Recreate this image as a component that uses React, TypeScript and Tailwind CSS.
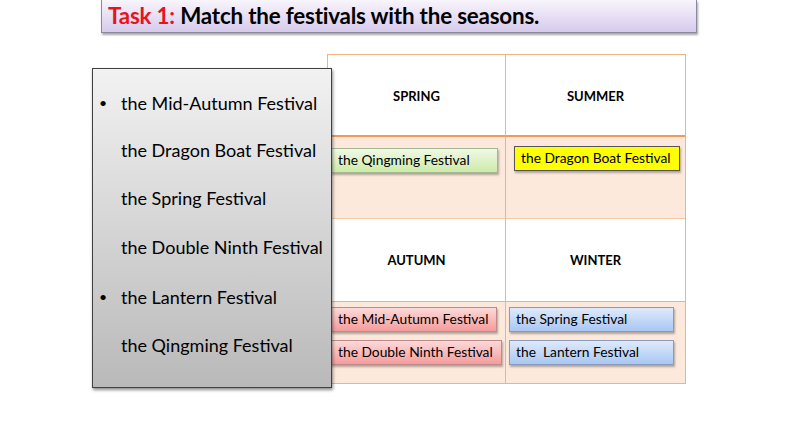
import React from "react";

const font = { fontFamily: "Lato, 'Open Sans', sans-serif" };

function Box({ text, cls }: { text: string; cls: string }) {
  return (
    <div
      className={`h-[25px] flex items-center pl-[6px] text-[13.8px] text-black whitespace-pre border shadow-[1px_2px_2px_rgba(0,0,0,0.3)] ${cls}`}
    >
      {text}
    </div>
  );
}

export default function App() {
  const items: [string, boolean, string][] = [
    ["the Mid-Autumn Festival", true, "h-[47px]"],
    ["the Dragon Boat Festival", false, "h-[48px]"],
    ["the Spring Festival", false, "h-[47px]"],
    ["the Double Ninth Festival", false, "h-[52px]"],
    ["the Lantern Festival", true, "h-[48px]"],
    ["the Qingming Festival", false, "h-[48px]"],
  ];
  return (
    <div className="w-[794px] h-[447px] bg-white relative overflow-hidden" style={font}>
      <div className="ml-[101px] w-[596px] h-[33px] border border-[#8a8a9a] border-t-0 bg-gradient-to-b from-[#f8f5fc] to-[#d7caec] shadow-[1px_2px_2px_rgba(0,0,0,0.35)] flex items-center pl-[6px]">
        <span className="text-[22.4px] font-bold leading-none tracking-[-0.2px]">
          <span className="text-[#e8141b]">Task 1: </span>
          <span className="text-black">Match the festivals with the seasons.</span>
        </span>
      </div>
      <div className="flex items-start">
        <div className="relative z-10 ml-[92px] mt-[35px] w-[240px] h-[320px] border border-[#404040] bg-gradient-to-b from-[#f2f2f2] to-[#b9b9b9] shadow-[1px_2px_3px_rgba(0,0,0,0.45)] pt-[10px]">
          {items.map(([t, b, h]) => (
            <div key={t} className={`flex items-center ${h} text-[18px] text-black leading-none`}>
              <span className="w-[28px] pl-[6px] text-[14px]">{b ? "•" : ""}</span>
              <span className="whitespace-nowrap">{t}</span>
            </div>
          ))}
        </div>
        <div className="ml-[-5px] mt-[21px] w-[359px] h-[330px] border border-[#f3b27e] grid grid-cols-[178px_179px] grid-rows-[82px_82px_83px_81px]">
          <div className="bg-white border-r border-[#f3b27e] border-b-2 border-b-[#ef9a5c] flex items-center justify-center pt-[3px] text-[13px] font-bold">SPRING</div>
          <div className="bg-white border-b-2 border-b-[#ef9a5c] flex items-center justify-center pt-[3px] text-[13px] font-bold">SUMMER</div>
          <div className="bg-[#fce9dc] border-r border-[#f3b27e] border-b border-b-[#f7c9a3] pt-[11px] pl-[3px]">
            <div className="w-[167px]">
              <Box text="the Qingming Festival" cls="border-[#a6b891] bg-gradient-to-b from-[#f0f9e6] to-[#cdeaa8]" />
            </div>
          </div>
          <div className="bg-[#fce9dc] border-b border-b-[#f7c9a3] pt-[9px] pl-[8px]">
            <div className="w-[166px]">
              <Box text="the Dragon Boat Festival" cls="border-[#555555] bg-[#ffff00]" />
            </div>
          </div>
          <div className="bg-white border-r border-[#f3b27e] border-b border-b-[#f3b27e] flex items-center justify-center pt-[2px] text-[13px] font-bold">AUTUMN</div>
          <div className="bg-white border-b border-b-[#f3b27e] flex items-center justify-center pt-[2px] text-[13px] font-bold">WINTER</div>
          <div className="bg-[#fce9dc] border-r border-[#f3b27e] pt-[5px] pl-[3px] flex flex-col gap-[8px]">
            <div className="w-[166px]">
              <Box text="the Mid-Autumn Festival" cls="border-[#c08a8a] bg-gradient-to-b from-[#fcd9d9] to-[#f39c9c]" />
            </div>
            <div className="w-[171px]">
              <Box text="the Double Ninth Festival" cls="border-[#c08a8a] bg-gradient-to-b from-[#fcd9d9] to-[#f39c9c]" />
            </div>
          </div>
          <div className="bg-[#fce9dc] pt-[5px] pl-[3px] flex flex-col gap-[8px]">
            <div className="w-[165px]">
              <Box text="the Spring Festival" cls="border-[#8a9ab8] bg-gradient-to-b from-[#dfeafb] to-[#a9c7f3]" />
            </div>
            <div className="w-[165px]">
              <Box text="the  Lantern Festival" cls="border-[#8a9ab8] bg-gradient-to-b from-[#dfeafb] to-[#a9c7f3]" />
            </div>
          </div>
        </div>
      </div>
    </div>
  );
}
